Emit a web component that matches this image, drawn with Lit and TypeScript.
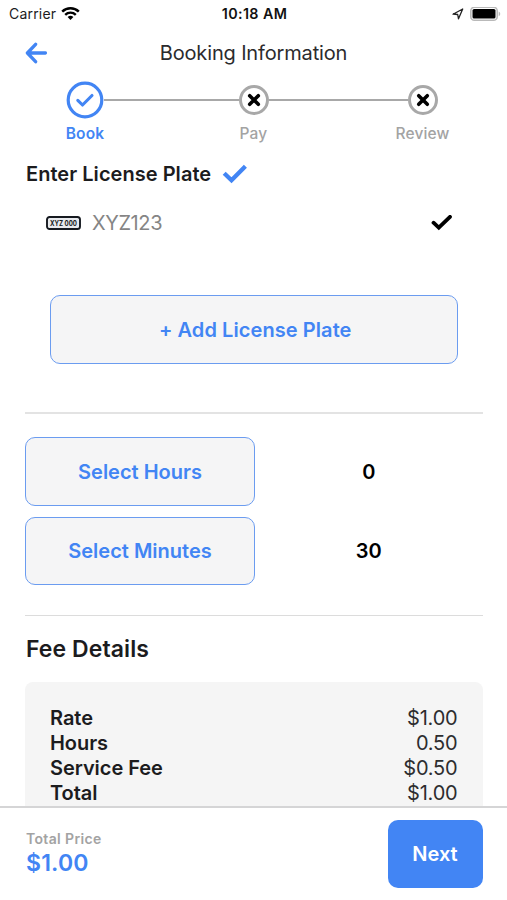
import { LitElement, html, css, svg } from "lit";
import { customElement } from "lit/decorators.js";

const fees = [
  { label: "Rate", value: "$1.00" },
  { label: "Hours", value: "0.50" },
  { label: "Service Fee", value: "$0.50" },
  { label: "Total", value: "$1.00" },
];

const pending = svg`
  <circle cx="15" cy="15" r="13.5" stroke="#a8a8a8" stroke-width="3"/>
  <path d="M10.7 10.7l8.6 8.6M19.3 10.7l-8.6 8.6" stroke="#000" stroke-width="3.6" stroke-linecap="round"/>`;

@customElement("app-root")
export class AppRoot extends LitElement {
  static styles = css`
    :host {
      display: flex;
      flex-direction: column;
      box-sizing: border-box;
      width: 507px;
      height: 900px;
      overflow: hidden;
      background: #fff;
      color: #1c1c1e;
      font-family: Inter, "Liberation Sans", sans-serif;
      font-size: 20px;
      line-height: 24px;
      white-space: nowrap;
    }
    svg { display: block; flex: none; fill: none; }
    .status {
      flex: none;
      display: grid;
      grid-template-columns: 1fr auto 1fr;
      align-items: center;
      height: 28px;
      padding: 0 6px 0 9px;
      box-sizing: border-box;
      font-size: 14px;
    }
    .carrier { display: flex; align-items: center; gap: 5px; letter-spacing: 0.2px; }
    .clock { font-size: 14.3px; font-weight: 600; letter-spacing: 0.4px; color: #111; margin-right: 1px; }
    .power { display: flex; align-items: center; justify-content: flex-end; gap: 6px; }
    .nav {
      flex: none;
      display: grid;
      grid-template-columns: 60px 1fr 60px;
      align-items: center;
      height: 50px;
      color: #2b2b2d;
    }
    .back { margin-left: 25px; }
    .title { text-align: center; letter-spacing: -0.15px; }
    .steps {
      flex: none;
      display: flex;
      height: 72px;
      padding: 3px 69.5px 0 66px;
      box-sizing: border-box;
      color: #a3a3a3;
      font-size: 15.5px;
      font-weight: 500;
    }
    .step { display: flex; flex-direction: column; align-items: center; width: 38px; }
    .step.small { width: 30px; }
    .icon { display: flex; align-items: center; height: 38px; }
    .step .label { margin-top: 3px; letter-spacing: 0.15px; }
    .step.on { color: #4285f4; font-weight: 600; }
    .bar { flex: 134.5; height: 2.5px; margin-top: 17.5px; background: #a8a8a8; }
    .bar.long { flex: 139; }
    .content { flex: 1; min-height: 0; overflow: hidden; padding: 0 24.5px 0 25px; }
    .heading { display: flex; align-items: center; gap: 11px; height: 48px; padding-left: 1px; font-weight: 600; }
    .heading .text { letter-spacing: 0.04px; }
    .plate { display: flex; align-items: center; height: 49px; padding: 0 30px 0 21px; color: #858585; }
    .plate .number { flex: 1; margin-left: 11px; letter-spacing: -0.4px; }
    .btn {
      display: flex;
      align-items: center;
      justify-content: center;
      box-sizing: border-box;
      height: 68.5px;
      padding-top: 1px;
      border: 1.4px solid #6b9cf0;
      border-radius: 10px;
      background: #f5f5f6;
      color: #4285f4;
      font-weight: 600;
    }
    .add { margin: 48px 25px 0 25px; padding-left: 3px; gap: 5px; letter-spacing: 0.08px; }
    .rule { height: 2px; background: #e3e3e3; }
    .first { margin-top: 48.5px; }
    .second { margin-top: 30px; height: 1px; background: #dcdcdc; }
    .times { display: grid; grid-template-columns: 230px 1fr; row-gap: 11px; align-items: center; margin-top: 23px; }
    .amount { padding-top: 1px; text-align: center; font-weight: 600; color: #000; }
    .fee-title { margin-top: 19px; height: 28px; padding-left: 1px; line-height: 28px; font-size: 23px; font-weight: 600; letter-spacing: 0.08px; }
    .card { margin-top: 19px; height: 150px; padding: 24px 25px; box-sizing: border-box; border-radius: 8px; background: #f5f5f5; }
    .fee { display: flex; justify-content: space-between; line-height: 25px; }
    .fee .name { font-weight: 600; letter-spacing: -0.05px; }
    .fee .value { color: #2d2d2f; letter-spacing: -0.2px; }
    .footer {
      flex: none;
      display: flex;
      align-items: flex-start;
      justify-content: space-between;
      box-sizing: border-box;
      height: 94px;
      padding: 11.5px 24.5px 0 26px;
      border-top: 2px solid #d5d5d6;
    }
    .sum { margin-top: 10.5px; }
    .caption { font-size: 14px; line-height: 18px; font-weight: 600; letter-spacing: 0.35px; color: #a3a3a3; }
    .price { font-size: 23px; line-height: 30px; font-weight: 600; letter-spacing: 0.2px; color: #4285f4; }
    .next { width: 95px; padding-top: 0; border: 0; background: #4285f4; color: #fff; }
  `;

  render() {
    return html`
      <div class="status">
        <div class="carrier">
          <span>Carrier</span>
          <svg width="19" height="14" viewBox="0 0 19 14">
            <path d="M1.2 4.7a12 12 0 0 1 16.6 0" stroke="#000" stroke-width="2.5"/>
            <path d="M4.2 7.8a7.6 7.6 0 0 1 10.6 0" stroke="#000" stroke-width="2.4"/>
            <path d="M6.6 10.1a4.2 4.2 0 0 1 5.8 0L9.5 13z" fill="#000"/>
          </svg>
        </div>
        <span class="clock">10:18 AM</span>
        <div class="power">
          <svg width="12" height="12" viewBox="0 0 12 12">
            <path d="M1 6.2L10.7 1 6.5 10.8 5.7 6.5z" stroke="#222" stroke-width="1.3" stroke-linejoin="round"/>
          </svg>
          <svg width="31" height="15" viewBox="0 0 31 15">
            <rect x="0.8" y="0.3" width="26.4" height="13" rx="3.6" stroke="#b9b9b9" stroke-width="1.6"/>
            <rect x="2.5" y="2" width="23" height="9.6" rx="1.6" fill="#000"/>
            <path d="M28.7 4.5c2 .8 2 3.9 0 4.7z" fill="#b9b9b9"/>
          </svg>
        </div>
      </div>

      <div class="nav">
        <svg class="back" width="22" height="22" viewBox="0 0 22 22">
          <path d="M10.6 2.3L2.4 11l8.2 8.7M2.8 11h17.6" stroke="#4285f4" stroke-width="3.3" stroke-linecap="round" stroke-linejoin="round"/>
        </svg>
        <span class="title">Booking Information</span>
      </div>

      <div class="steps">
        <div class="step on">
          <div class="icon">
            <svg width="38" height="38" viewBox="0 0 38 38">
              <circle cx="19" cy="19" r="16.8" stroke="#4285f4" stroke-width="3.2"/>
              <path d="M11.8 19.3l4.7 4.7 9.5-9.5" stroke="#4285f4" stroke-width="3.1" stroke-linecap="round" stroke-linejoin="round"/>
            </svg>
          </div>
          <span class="label">Book</span>
        </div>
        <div class="bar"></div>
        <div class="step small">
          <div class="icon"><svg width="30" height="30" viewBox="0 0 30 30">${pending}</svg></div>
          <span class="label">Pay</span>
        </div>
        <div class="bar long"></div>
        <div class="step small">
          <div class="icon"><svg width="30" height="30" viewBox="0 0 30 30">${pending}</svg></div>
          <span class="label">Review</span>
        </div>
      </div>

      <div class="content">
        <div class="heading">
          <span class="text">Enter License Plate</span>
          <svg width="26" height="20" viewBox="0 0 26 20">
            <path d="M2.2 9.3l7.3 7L23.4 2.3" stroke="#4285f4" stroke-width="4.3"/>
          </svg>
        </div>
        <div class="plate">
          <svg width="35" height="14" viewBox="0 0 35 14">
            <rect x="1" y="1" width="33" height="12" rx="2.6" fill="#e8eaee" stroke="#161a20" stroke-width="1.9"/>
            <text x="4" y="9.5" textLength="27" lengthAdjust="spacingAndGlyphs" fill="#161a20" font-size="7" font-weight="700">XYZ 000</text>
          </svg>
          <span class="number">XYZ123</span>
          <svg width="22" height="16" viewBox="0 0 22 16">
            <path d="M2.5 7.7l5.3 5L19 1.8" stroke="#000" stroke-width="3.8" stroke-linecap="round"/>
          </svg>
        </div>
        <div class="btn add"><span>+</span><span>Add License Plate</span></div>
        <div class="rule first"></div>
        <div class="times">
          <div class="btn">Select Hours</div>
          <span class="amount">0</span>
          <div class="btn">Select Minutes</div>
          <span class="amount">30</span>
        </div>
        <div class="rule second"></div>
        <div class="fee-title">Fee Details</div>
        <div class="card">
          ${fees.map(
            (f) => html`<div class="fee">
              <span class="name">${f.label}</span>
              <span class="value">${f.value}</span>
            </div>`
          )}
        </div>
      </div>

      <div class="footer">
        <div class="sum">
          <div class="caption">Total Price</div>
          <div class="price">$1.00</div>
        </div>
        <div class="btn next">Next</div>
      </div>
    `;
  }
}
